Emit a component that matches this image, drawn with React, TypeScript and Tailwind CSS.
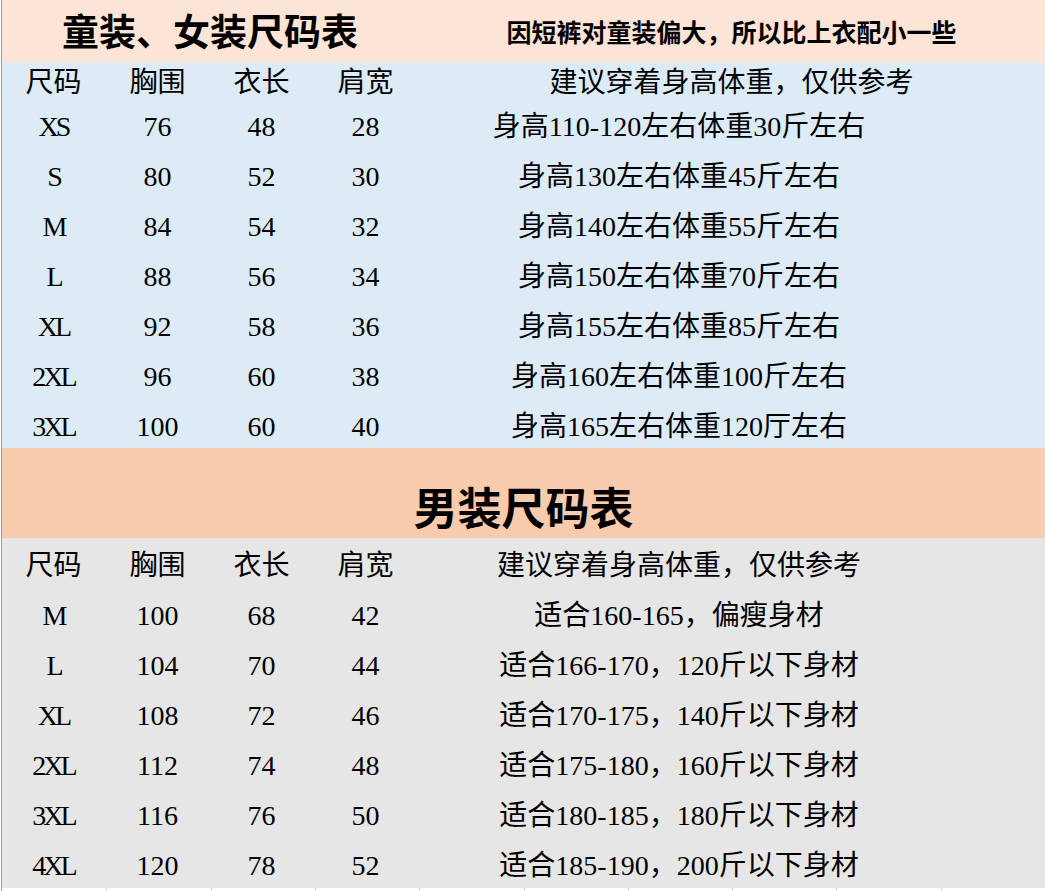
const women = [
  ["XS", "76", "48", "28", "身高110-120左右体重30斤左右"],
  ["S", "80", "52", "30", "身高130左右体重45斤左右"],
  ["M", "84", "54", "32", "身高140左右体重55斤左右"],
  ["L", "88", "56", "34", "身高150左右体重70斤左右"],
  ["XL", "92", "58", "36", "身高155左右体重85斤左右"],
  ["2XL", "96", "60", "38", "身高160左右体重100斤左右"],
  ["3XL", "100", "60", "40", "身高165左右体重120厅左右"],
];

const men = [
  ["M", "100", "68", "42", "适合160-165，偏瘦身材"],
  ["L", "104", "70", "44", "适合166-170，120斤以下身材"],
  ["XL", "108", "72", "46", "适合170-175，140斤以下身材"],
  ["2XL", "112", "74", "48", "适合175-180，160斤以下身材"],
  ["3XL", "116", "76", "50", "适合180-185，180斤以下身材"],
  ["4XL", "120", "78", "52", "适合185-190，200斤以下身材"],
];

const cols = "grid grid-cols-[103px_105px_103px_105px_522px_1fr] items-center";
const font = "font-['Liberation_Serif','Noto_Sans_CJK_SC',serif]";

function HeaderRow({ wide, height }: { wide: boolean; height: string }) {
  return (
    <div className={`${cols} ${height}`}>
      <div className="text-center">尺码</div>
      <div className="text-center">胸围</div>
      <div className="text-center">衣长</div>
      <div className="text-center">肩宽</div>
      <div className={wide ? "col-span-2 text-center" : "text-center"}>
        建议穿着身高体重，仅供参考
      </div>
    </div>
  );
}

function SizeRow({ row, height }: { row: string[]; height: string }) {
  return (
    <div className={`${cols} ${height}`}>
      <div className="text-center tracking-[-3px]">{row[0]}</div>
      <div className="text-center">{row[1]}</div>
      <div className="text-center">{row[2]}</div>
      <div className="text-center">{row[3]}</div>
      <div className="text-center">{row[4]}</div>
    </div>
  );
}

export default function App() {
  return (
    <div className={`w-[1045px] h-[891px] bg-white pl-[1px] overflow-hidden text-black text-[28px] leading-none ${font}`}>
      <div className="border-l border-[#9f9f9f] flex flex-col h-full">
        {/* 童装 / 女装 */}
        <div className="h-[62px] bg-[#fce4d6] grid grid-cols-[416px_1fr] items-center pt-[4px]">
          <div className="text-center text-[37px] font-bold">童装、女装尺码表</div>
          <div className="text-center text-[25px] font-bold">因短裤对童装偏大，所以比上衣配小一些</div>
        </div>
        <div className="h-[386px] bg-[#ddebf7] overflow-hidden">
          <HeaderRow wide height="h-[40px] pt-[2px]" />
          {women.map((r) => (
            <SizeRow key={r[0]} row={r} height="h-[50px]" />
          ))}
        </div>

        {/* 男装 */}
        <div className="h-[90px] bg-[#f8cbad] flex items-end justify-center pb-[5px]">
          <div className="text-[44px] font-bold">男装尺码表</div>
        </div>
        <div className="h-[350px] bg-[#e7e6e6] overflow-hidden">
          <HeaderRow wide={false} height="h-[53px] pt-[2px]" />
          {men.map((r, i) => (
            <SizeRow key={r[0]} row={r} height={i === men.length - 1 ? "h-[47px] pt-[2px]" : "h-[50px]"} />
          ))}
        </div>

        {/* gridline stubs */}
        <div className="flex-1 grid grid-cols-10">
          {Array.from({ length: 10 }).map((_, i) => (
            <div key={i} className={i === 0 ? "" : "border-l border-[#d0d0d0]"} />
          ))}
        </div>
      </div>
    </div>
  );
}
